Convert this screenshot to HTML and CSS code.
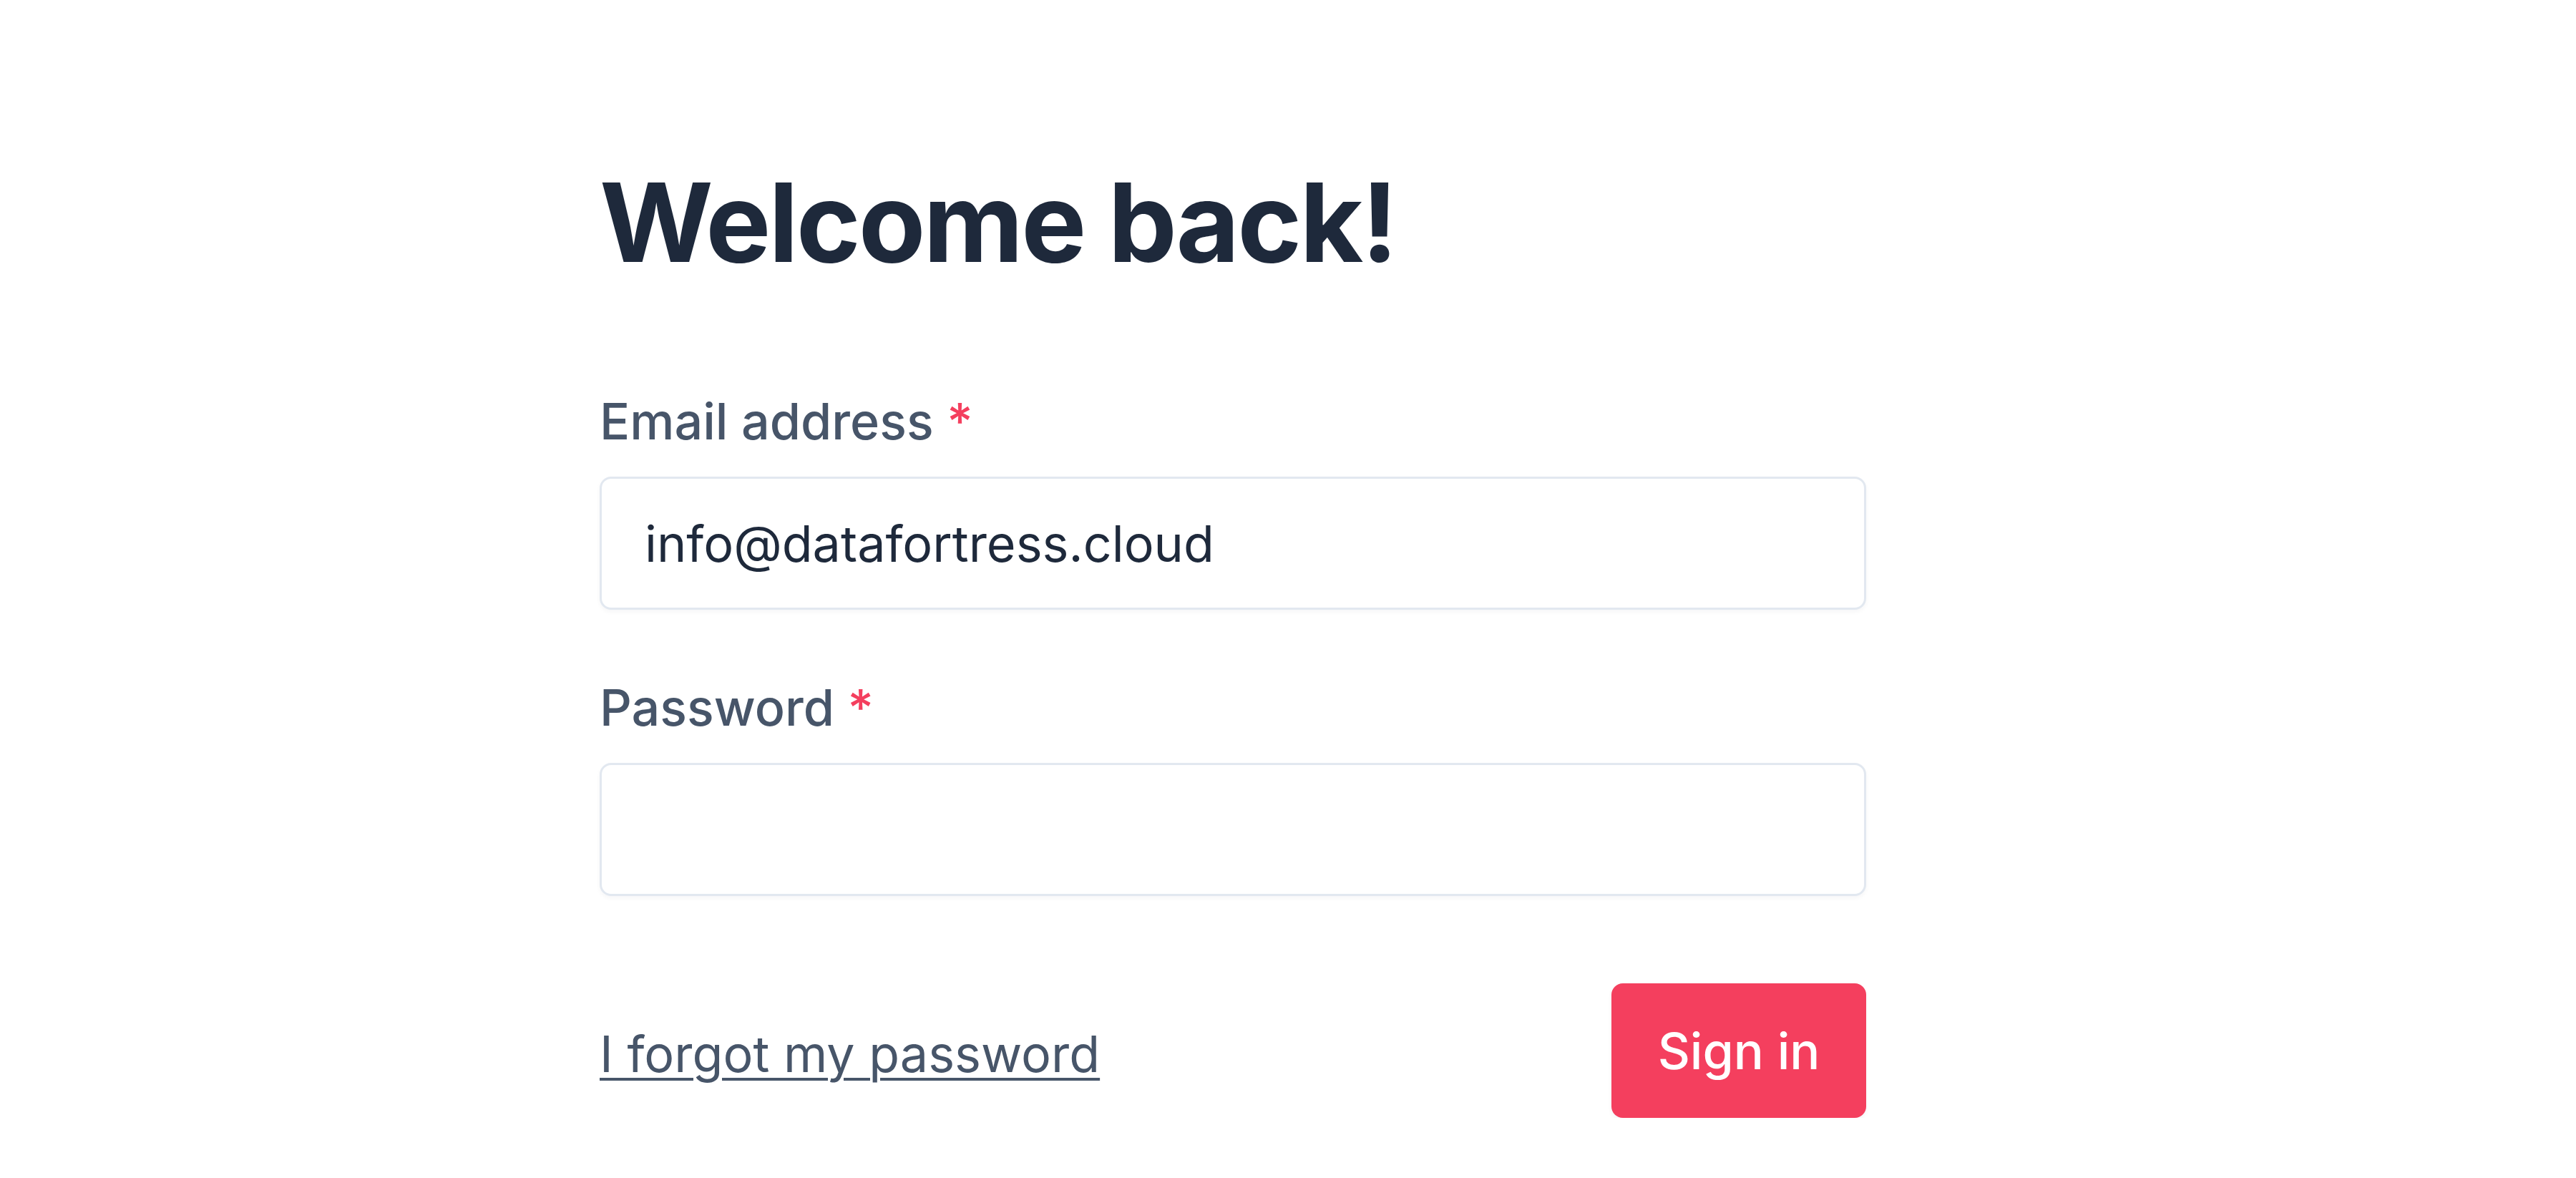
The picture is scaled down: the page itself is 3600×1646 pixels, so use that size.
FILE: index.html
```html
<!DOCTYPE html>
<html lang="en">
<head>
<meta charset="utf-8">
<title>Sign in</title>
<link rel="stylesheet" href="styles.css">
</head>
<body>
<main class="page">
  <form class="panel" onsubmit="return false;">
    <h1 class="title">Welcome back!</h1>
    <div class="field field-first">
      <label class="label" for="email">Email address <span class="req">*</span></label>
      <input class="input" id="email" type="email" value="info@datafortress.cloud">
    </div>
    <div class="field">
      <label class="label" for="password">Password <span class="req">*</span></label>
      <input class="input" id="password" type="password" value="">
    </div>
    <div class="actions">
      <a class="forgot" href="#">I forgot my password</a>
      <button class="btn" type="submit">Sign in</button>
    </div>
  </form>
</main>
</body>
</html>
```
FILE: styles.css
```css
* { box-sizing: border-box; }
html, body {
  margin: 0;
  padding: 0;
  background: #ffffff;
}
body {
  font-family: Inter, "Noto Sans", "Liberation Sans", sans-serif;
  color: #1e293b;
}
.page {
  display: flex;
  padding-left: 838px;
  padding-top: 234px;
}
.panel {
  width: 1770px;
  display: flex;
  flex-direction: column;
}
.title {
  margin: 0;
  font-size: 153px;
  line-height: 153px;
  font-weight: 700;
  color: #1e293b;
  letter-spacing: -3px;
}
.field {
  display: flex;
  flex-direction: column;
  margin-top: 84px;
}
.field-first {
  margin-top: 149px;
}
.label {
  font-size: 70px;
  line-height: 105px;
  font-weight: 500;
  color: #475569;
  margin-bottom: 25px;
}
.req {
  color: #f43f5e;
}
.input {
  height: 186px;
  width: 100%;
  border: 3px solid #e2e8f0;
  border-radius: 16px;
  padding: 0 60px;
  font-family: Inter, "Noto Sans", "Liberation Sans", sans-serif;
  font-size: 70px;
  color: #1e293b;
  background: #ffffff;
  box-shadow: 0 3px 6px rgba(15, 23, 42, 0.04);
  outline: none;
}
.actions {
  margin-top: 122px;
  display: flex;
  align-items: center;
  justify-content: space-between;
}
.forgot {
  font-size: 70px;
  line-height: 105px;
  color: #475569;
  text-decoration: underline;
  text-decoration-thickness: 4px;
  text-underline-offset: 8px;
  margin-top: 8px;
}
.btn {
  height: 188px;
  width: 356px;
  border: none;
  border-radius: 16px;
  background: #f43f5e;
  color: #ffffff;
  font-family: Inter, "Noto Sans", "Liberation Sans", sans-serif;
  font-size: 70px;
  font-weight: 500;
  box-shadow: 0 3px 6px rgba(15, 23, 42, 0.05);
  cursor: pointer;
}
```
